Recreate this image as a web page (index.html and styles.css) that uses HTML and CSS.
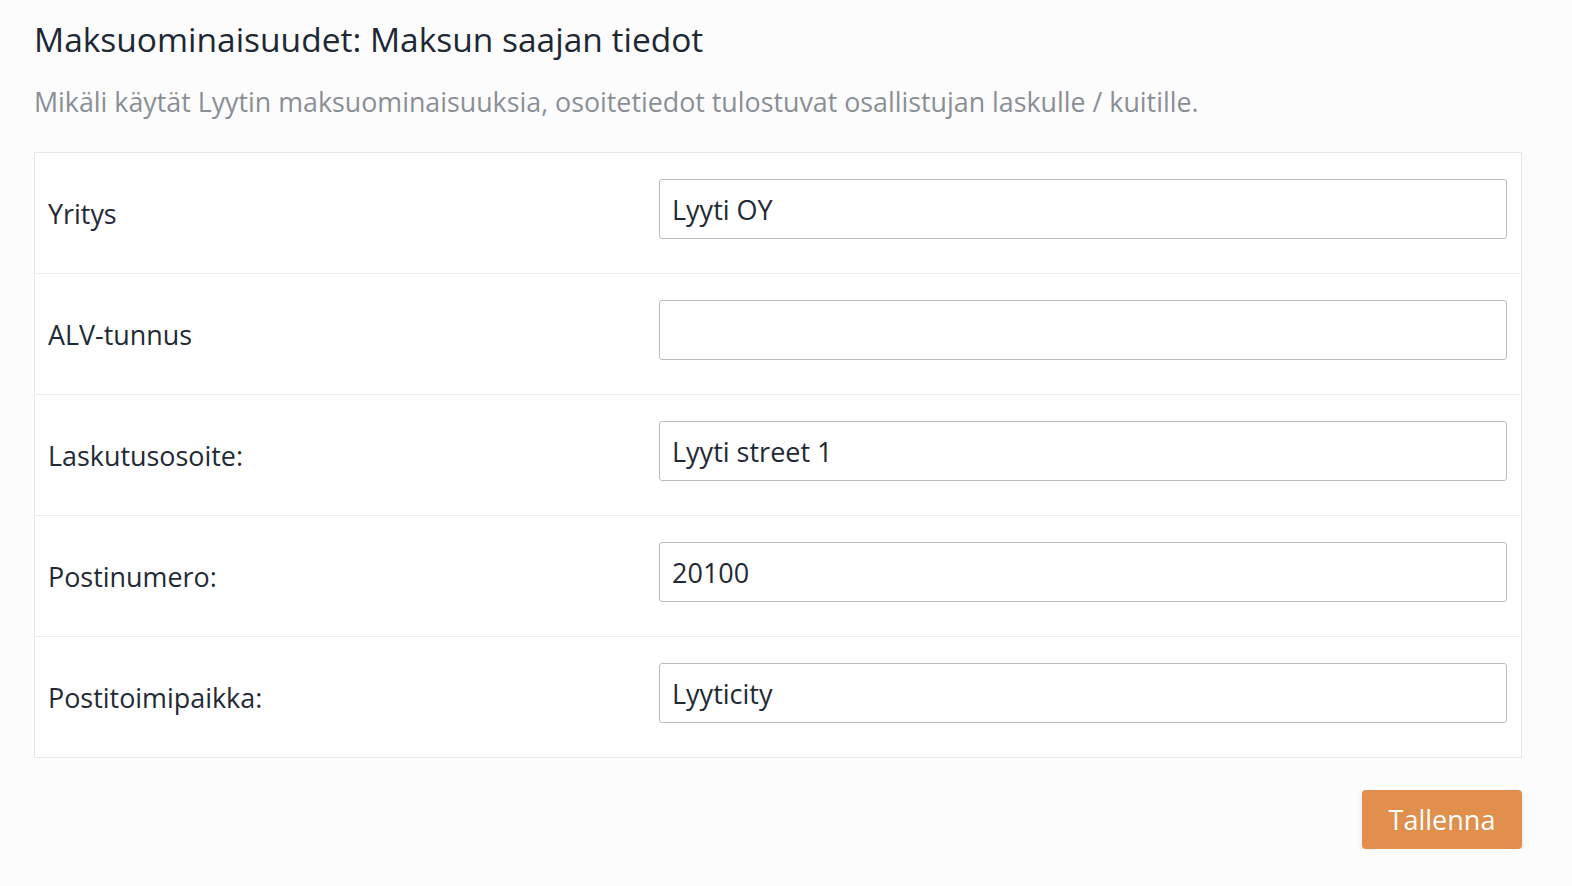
FILE: index.html
```html
<!DOCTYPE html>
<html lang="fi">
<head>
<meta charset="utf-8">
<title>Maksun saajan tiedot</title>
<link rel="stylesheet" href="styles.css">
</head>
<body>
<main class="page">
  <h1 class="title">Maksuominaisuudet: Maksun saajan tiedot</h1>
  <p class="lead">Mikäli käytät Lyytin maksuominaisuuksia, osoitetiedot tulostuvat osallistujan laskulle / kuitille.</p>
  <div class="form-table">
    <div class="row">
      <label class="label" for="f1">Yritys</label>
      <div class="field"><input class="input" id="f1" type="text" value="Lyyti OY"></div>
    </div>
    <div class="row">
      <label class="label" for="f2">ALV-tunnus</label>
      <div class="field"><input class="input" id="f2" type="text" value=""></div>
    </div>
    <div class="row">
      <label class="label" for="f3">Laskutusosoite:</label>
      <div class="field"><input class="input" id="f3" type="text" value="Lyyti street 1"></div>
    </div>
    <div class="row">
      <label class="label" for="f4">Postinumero:</label>
      <div class="field"><input class="input" id="f4" type="text" value="20100"></div>
    </div>
    <div class="row">
      <label class="label" for="f5">Postitoimipaikka:</label>
      <div class="field"><input class="input" id="f5" type="text" value="Lyyticity"></div>
    </div>
  </div>
  <div class="actions">
    <button class="btn" type="button">Tallenna</button>
  </div>
</main>
</body>
</html>
```
FILE: styles.css
```css
html, body {
  margin: 0;
  padding: 0;
  background: #fcfcfc;
}
body {
  font-family: "Open Sans", "Noto Sans", "Liberation Sans", sans-serif;
  color: #1f2a36;
}
.page {
  width: 1488px;
  margin-left: 34px;
  padding-top: 19px;
}
.title {
  margin: 0;
  font-size: 33.5px;
  font-weight: 400;
  line-height: 40px;
  color: #1d2834;
}
.lead {
  margin: 26px 0 0;
  font-size: 26.8px;
  line-height: 34px;
  color: #8a8f96;
}
.form-table {
  margin-top: 33px;
  background: #fff;
  border: 1px solid #e9e9e9;
}
.row {
  display: grid;
  grid-template-columns: 611px 1fr;
  align-items: center;
  border-top: 1px solid #ececec;
  height: 120px;
}
.row:first-child {
  border-top: none;
}
.label {
  padding-left: 13px;
  font-size: 26.9px;
  color: #1f2a36;
}
.field {
  padding: 0 14px 8px 13px;
}
.input {
  display: block;
  box-sizing: border-box;
  width: 100%;
  height: 60px;
  border: 1px solid #bcbcbc;
  border-radius: 3px;
  background: #fff;
  padding: 0 12px;
  font-family: "Open Sans", "Noto Sans", sans-serif;
  font-size: 27px;
  color: #1f2a36;
  outline: none;
}
.actions {
  display: flex;
  justify-content: flex-end;
  margin-top: 32px;
}
.btn {
  width: 160px;
  height: 59px;
  border: none;
  border-radius: 4px;
  background: #e08f4c;
  color: #fff;
  font-family: "Open Sans", "Noto Sans", sans-serif;
  font-size: 27px;
  font-weight: 500;
  box-shadow: 0 2px 4px rgba(0, 0, 0, 0.12);
  cursor: pointer;
}
```
